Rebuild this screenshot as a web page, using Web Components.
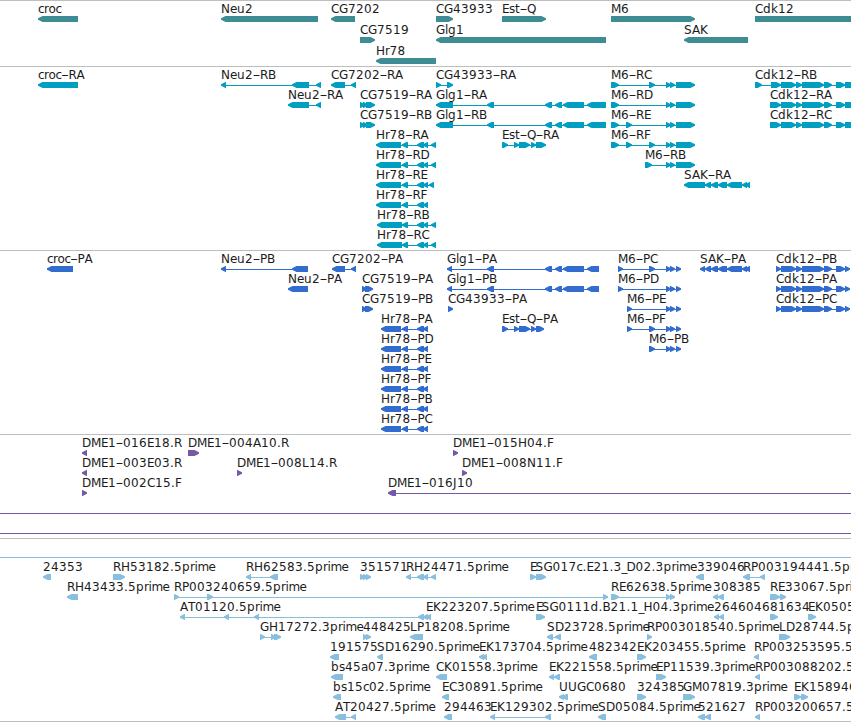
<!DOCTYPE html>
<html lang="en">
<head>
<meta charset="utf-8">
<title>Genome tracks</title>
<style>
  body {
    margin: 0;
    background: #fff;
    overflow: hidden;
  }
</style>
</head>
<body>

<genome-view>
  <genome-track name="genes" color="#3f8d94" row-height="21" rows="3" pad="3"></genome-track>
  <genome-track name="transcripts" color="#009fc1" row-height="20" rows="9" pad="4"></genome-track>
  <genome-track name="proteins" color="#316cce" row-height="20" rows="9" pad="4"></genome-track>
  <genome-track name="clones" color="#7658a8" row-height="20" rows="5" pad="4"></genome-track>
  <genome-track name="ests" color="#88bfdf" row-height="20" rows="9" pad="3"></genome-track>
</genome-view>

<script>
// exon groups shared by several isoforms
const GLG = "487-494 545-552 555-562 563-584 587-";
const M6 = "666-671 670-675 676-";
const CDK = "781-796 796-802 802-824 824-832 836-845 845-";
const HR = "402-408 417-424 423-428";
const SAK = "705-711 711-718 718-727 727-742 742-747 745-750";
const EST = "502-508 514-519 519-530 531-536 536-";

// [row, label, strand, segments, label x when it differs from the start]
const TRACKS = {
  genes: [
    [0, "croc", "-", "38-78"],
    [0, "Neu2", "-", "221-318"],
    [0, "CG7202", "-", "331-355"],
    [0, "CG43933", "+", "436-453"],
    [0, "Est-Q", "+", "502-546"],
    [0, "M6", "+", "611-695"],
    [0, "Cdk12", "+", "755-870"],
    [1, "CG7519", "+", "360-375"],
    [1, "Glg1", "-", "436-606"],
    [1, "SAK", "-", "684-748"],
    [2, "Hr78", "-", "376-436"],
  ],
  transcripts: [
    [0, "croc-RA", "-", "38-78"],
    [0, "Neu2-RB", "-", "221-226 292-309 316-321"],
    [0, "CG7202-RA", "-", "331-345 351-356"],
    [0, "CG43933-RA", "+", "436-441 447-453"],
    [0, "M6-RC", "+", `611-619 649-655 ${M6}695`],
    [0, "Cdk12-RB", "+", `755-762 771-781 ${CDK}856`],
    [1, "Neu2-RA", "-", "288-309 316-321"],
    [1, "CG7519-RA", "+", "360-365 363-368 366-375"],
    [1, "Glg1-RA", "-", `436-453 ${GLG}606`],
    [1, "M6-RD", "+", `611-619 ${M6}695`],
    [1, "Cdk12-RA", "+", `770-781 ${CDK}856`],
    [2, "CG7519-RB", "+", "360-365 363-368 366-375"],
    [2, "Glg1-RB", "-", `436-453 ${GLG}606`],
    [2, "M6-RE", "+", `611-619 626-632 ${M6}695`],
    [2, "Cdk12-RC", "+", `770-781 ${CDK}856`],
    [3, "Hr78-RA", "-", `376-401 ${HR} 431-436`],
    [3, "Est-Q-RA", "+", `${EST}546`],
    [3, "M6-RF", "+", `611-619 626-632 649-655 ${M6}695`],
    [4, "Hr78-RD", "-", `376-401 ${HR} 431-436`],
    [4, "M6-RB", "+", `645-652 ${M6}695`],
    [5, "Hr78-RE", "-", `376-401 ${HR} 429-434`],
    [5, "SAK-RA", "-", `684-705 ${SAK}`],
    [6, "Hr78-RF", "-", `376-401 ${HR}`],
    [7, "Hr78-RB", "-", `377-402 ${HR} 431-436`],
    [8, "Hr78-RC", "-", `377-402 ${HR} 431-436`],
  ],
  proteins: [
    [0, "croc-PA", "-", "47-73"],
    [0, "Neu2-PB", "-", "221-226 292-308"],
    [0, "CG7202-PA", "-", "332-345 351-356"],
    [0, "Glg1-PA", "-", `447-452 ${GLG}599`],
    [0, "M6-PC", "+", `618-623 649-655 ${M6}681`],
    [0, "SAK-PA", "-", `700-705 ${SAK}`],
    [0, "Cdk12-PB", "+", `776-781 ${CDK}850`],
    [1, "Neu2-PA", "-", "288-308"],
    [1, "CG7519-PA", "+", "362-367 365-373"],
    [1, "Glg1-PB", "-", `447-452 ${GLG}599`],
    [1, "M6-PD", "+", `618-623 ${M6}681`],
    [1, "Cdk12-PA", "+", `776-781 ${CDK}850`],
    [2, "CG7519-PB", "+", "362-367 365-373"],
    [2, "CG43933-PA", "+", "448-453"],
    [2, "M6-PE", "+", `627-632 ${M6}681`],
    [2, "Cdk12-PC", "+", `776-781 ${CDK}850`],
    [3, "Hr78-PA", "-", `381-401 ${HR}`],
    [3, "Est-Q-PA", "+", `${EST}544`],
    [3, "M6-PF", "+", `627-632 649-655 ${M6}681`],
    [4, "Hr78-PD", "-", `381-401 ${HR}`],
    [4, "M6-PB", "+", `649-655 ${M6}681`],
    [5, "Hr78-PE", "-", `381-401 ${HR}`],
    [6, "Hr78-PF", "-", `381-401 ${HR}`],
    [7, "Hr78-PB", "-", `381-401 ${HR}`],
    [8, "Hr78-PC", "-", `381-401 ${HR}`],
  ],
  clones: [
    [0, "DME1-016E18.R", "-", "82-87"],
    [0, "DME1-004A10.R", "+", "188-199"],
    [0, "DME1-015H04.F", "+", "453-458"],
    [1, "DME1-003E03.R", "-", "82-87"],
    [1, "DME1-008L14.R", "+", "237-242"],
    [1, "DME1-008N11.F", "+", "462-467"],
    [2, "DME1-002C15.F", "+", "82-87"],
    [2, "DME1-016J10", "-", "388-396 900-910"],
    [3, "", "+", "-20--10 900-910"],
    [4, "", "+", "-20--10 900-910"],
  ],
  ests: [
    [0, "", "+", "-20--10 900-910"],
    [1, "24353", "-", "43-51"],
    [1, "RH53182.5prime", "+", "113-125"],
    [1, "RH62583.5prime", "-", "246-251 270-278"],
    [1, "351571", "+", "360-365 363-368 366-371"],
    [1, "RH24471.5prime", "-", "406-411 417-424 423-428 431-436"],
    [1, "ESG017c.E21.3_D02.3prime", "+", "530-536 536-546"],
    [1, "339046", "-", "696-704", 697],
    [1, "RP003194441.5prime", "-", "743-750 760-765"],
    [2, "RH43433.5prime", "-", "67-78"],
    [2, "RP003240659.5prime", "+", "174-179 207-213 603-608"],
    [2, "RE62638.5prime", "+", "611-619 666-671 670-675"],
    [2, "308385", "-", "713-718 718-724"],
    [2, "RE33067.5prime", "+", "770-780 780-786"],
    [3, "AT01120.5prime", "-", "180-185 224-229 254-259 418-424"],
    [3, "EK223207.5prime", "-", "423-428 426-431", 426],
    [3, "ESG0111d.B21.1_H04.3prime", "+", "536-545"],
    [3, "264604", "-", "714-719 719-724"],
    [3, "681634", "+", "770-778", 762],
    [3, "EK05054.5prime", "+", "808-816"],
    [4, "GH17272.3prime", "+", "260-265 271-276 274-281"],
    [4, "448425", "+", "363-368 366-371"],
    [4, "LP18208.5prime", "-", "410-423"],
    [4, "SD23728.5prime", "-", "547-553 555-561"],
    [4, "RP003018540.5prime", "+", "647-652"],
    [4, "LD28744.5prime", "+", "779-790"],
    [5, "191575", "-", "330-339"],
    [5, "SD16290.5prime", "-", "377-383"],
    [5, "EK173704.5prime", "-", "479-484 482-487"],
    [5, "482342", "-", "589-597"],
    [5, "EK203455.5prime", "+", "637-646"],
    [5, "RP003253595.5prime", "-", "754-759"],
    [6, "bs45a07.3prime", "-", "331-343"],
    [6, "CK01558.3prime", "-", "436-447"],
    [6, "EK221558.5prime", "-", "549-554 554-560"],
    [6, "EP11539.3prime", "+", "656-666"],
    [6, "RP003088202.5prime", "-", "755-760"],
    [7, "bs15c02.5prime", "-", "333-341"],
    [7, "EC30891.5prime", "-", "442-449"],
    [7, "UUGC0680", "-", "559-564 562-568"],
    [7, "324385", "+", "637-646"],
    [7, "GM07819.3prime", "+", "683-695"],
    [7, "EK158946.5prime", "+", "794-801 801-808"],
    [8, "AT20427.5prime", "-", "335-346 351-356"],
    [8, "294463", "-", "444-452"],
    [8, "EK129302.5prime", "-", "490-495 545-551"],
    [8, "SD05084.5prime", "-", "598-606"],
    [8, "521627", "-", "698-705 705-711"],
    [8, "RP003200657.5prime", "-", "755-760"],
  ],
};

// pixel advances, anything missing is 8 wide
const ADVANCE = {
  c: 6, r: 4.5, o: 7, e: 7, u: 8, k: 7, l: 3, s: 6, t: 5, a: 7, i: 3, m: 11,
  C: 8, G: 9, N: 9, H: 9, D: 9, M: 10, E: 7, U: 9, Q: 9, T: 7, L: 7, P: 7,
  F: 7, J: 4, "-": 7, ".": 4, "_": 5,
};

function labelMarkup(text, x, y) {
  let at = x;
  let out = "";
  for (let i = 0; i < text.length; i++) {
    const ch = text[i];
    if (ch === "-") {
      out += `<tspan x="${at - 0.5}" textLength="8" lengthAdjust="spacingAndGlyphs">-</tspan>`;
    } else {
      out += `<tspan x="${at}">${ch}</tspan>`;
    }
    at += ADVANCE[ch] || 8;
    // ES sits tighter than the table says
    if (ch === "E" && text[i + 1] === "S") at -= 1.5;
  }
  return `<text y="${y}">${out}</text>`;
}

function exonMarkup(start, end, strand, top) {
  const head = Math.min(5, end - start);
  const mid = top + 3;
  const bottom = top + 6;
  if (strand === "-") {
    const neck = start + head;
    return `<path d="M${start} ${mid - 0.7}L${neck - 0.5} ${top}H${end}V${bottom}H${neck - 0.5}L${start} ${mid + 0.7}z"/>`;
  }
  const neck = end - head;
  return `<path d="M${start} ${top}H${neck + 0.5}L${end} ${mid - 0.7}V${mid + 0.7}L${neck + 0.5} ${bottom}H${start}z"/>`;
}

class GenomeView extends HTMLElement {
  constructor() {
    super();
    this.attachShadow({ mode: "open" });
  }

  connectedCallback() {
    this.shadowRoot.innerHTML = `
      <style>
        :host {
          display: flex;
          flex-direction: column;
          width: 851px;
          height: 722px;
          overflow: hidden;
          box-sizing: border-box;
          border-bottom: 1px solid #bebebe;
          background: #fff;
          color: #000;
          font: 12px "DejaVu Sans", sans-serif;
        }
      </style>
      <slot></slot>
    `;
  }
}

class GenomeTrack extends HTMLElement {
  constructor() {
    super();
    this.attachShadow({ mode: "open" });
  }

  connectedCallback() {
    const step = Number(this.getAttribute("row-height"));
    const height = step * Number(this.getAttribute("rows")) + Number(this.getAttribute("pad"));
    let shapes = "";
    let labels = "";

    for (const [row, label, strand, segments, labelX] of TRACKS[this.getAttribute("name")]) {
      const exons = segments.split(" ").map((s) => s.match(/^(-?\d+)-(-?\d+)$/).slice(1).map(Number));
      const start = exons[0][0];
      const end = exons[exons.length - 1][1];
      const top = row * step + 15;

      if (exons.length > 1) {
        shapes += `<rect x="${start + 2}" y="${top + 3}" width="${end - start - 4}" height="1"/>`;
      }
      for (const [a, b] of exons) {
        shapes += exonMarkup(a, b, strand, top);
      }
      if (label) {
        labels += labelMarkup(label, labelX || start, row * step + 12);
      }
    }

    this.shadowRoot.innerHTML = `
      <style>
        :host {
          display: block;
          flex: none;
          box-sizing: border-box;
          height: ${height}px;
          border-top: 1px solid #bebebe;
        }

        svg {
          display: block;
          width: 100%;
          height: 100%;
        }

        .shapes { fill: ${this.getAttribute("color")}; }
        .labels { fill: #1c1c1c; }
      </style>
      <svg>
        <g class="shapes">${shapes}</g>
        <g class="labels">${labels}</g>
      </svg>
    `;
  }
}

customElements.define("genome-view", GenomeView);
customElements.define("genome-track", GenomeTrack);
</script>
</body>
</html>
